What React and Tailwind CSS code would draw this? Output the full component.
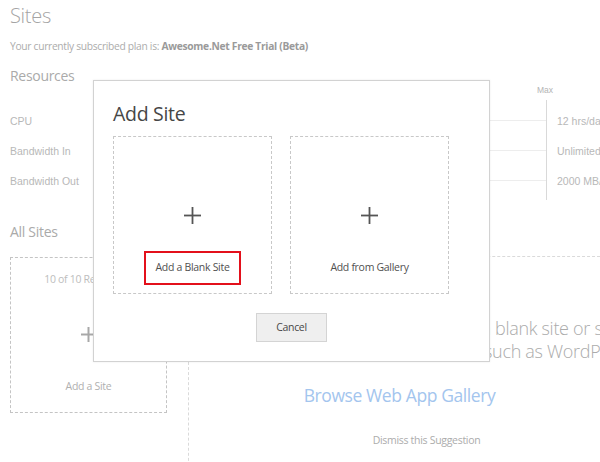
import React from "react";

const PlusIcon = ({ size = 17, color = "#555", width = 1.8 }) => (
  <svg width={size} height={size} viewBox={`0 0 ${size} ${size}`} fill="none">
    <line x1={size / 2} y1="0" x2={size / 2} y2={size} stroke={color} strokeWidth={width} />
    <line x1="0" y1={size / 2} x2={size} y2={size / 2} stroke={color} strokeWidth={width} />
  </svg>
);

const resources = [
  { label: "CPU", max: "12 hrs/day" },
  { label: "Bandwidth In", max: "Unlimited" },
  { label: "Bandwidth Out", max: "2000 MB/day" },
];

const ChoiceCard = ({ label, selected }) => (
  <div className="w-[159px] h-[158px] border border-dashed border-[#c8c8c8] flex flex-col items-center">
    <div className="mt-[70px]">
      <PlusIcon />
    </div>
    <div
      className={`mt-[27px] w-[97px] h-[34px] flex items-center justify-center border-2 text-[10.5px] text-[#505050] whitespace-nowrap ${
        selected ? "border-[#e3101b]" : "border-transparent"
      }`}
    >
      {label}
    </div>
  </div>
);

export default function App() {
  return (
    <div
      className="relative w-[600px] h-[462px] overflow-hidden bg-white tracking-[-0.3px]"
      style={{ fontFamily: '"Open Sans", "Noto Sans", sans-serif' }}
    >
      {/* page behind the dialog */}
      <div className="pl-[10px] text-[#acacac]">
        <h1 className="pt-[2px] text-[20px] leading-[28px] font-light text-[#a4a4a4]">Sites</h1>
        <p className="mt-[8px] text-[10.25px] leading-[16px] whitespace-nowrap">
          Your currently subscribed plan is:{" "}
          <span className="font-bold text-[#9a9a9a]">Awesome.Net Free Trial (Beta)</span>
        </p>

        <h2 className="mt-[12px] text-[14px] leading-[20px] text-[#aaa]">Resources</h2>

        <div
          className="-mt-[2px] w-[700px] tracking-normal"
          style={{ fontFamily: '"Liberation Sans", Arial, sans-serif' }}
        >
          <div className="h-[16px] flex">
            <div className="w-[527px]" />
            <span className="text-[8.5px] leading-[12px] text-[#b4b4b4]">Max</span>
          </div>
          <div className="flex">
            <div className="w-[536px] py-[5px]">
              {resources.map((r) => (
                <div key={r.label} className="h-[30px] flex items-center">
                  <span className="w-[110px] pt-[3px] text-[10.5px] text-[#b8b8b8]">{r.label}</span>
                  <div className="flex-1 h-px bg-[#ededed]" />
                </div>
              ))}
            </div>
            <div className="border-l border-[#d9d9d9] pl-[10px] py-[5px]">
              {resources.map((r) => (
                <div key={r.label} className="h-[30px] pt-[3px] flex items-center text-[10.5px] text-[#b8b8b8] whitespace-nowrap">
                  {r.max}
                </div>
              ))}
            </div>
          </div>
        </div>

        <h2 className="mt-[22px] text-[14px] leading-[20px] text-[#aaa]">All Sites</h2>

        <div className="mt-[14px] flex items-start">
          <div className="mt-px w-[157px] h-[156px] shrink-0 border border-dashed border-[#c4c4c4] flex flex-col items-center">
            <span className="mt-[13px] text-[10.5px] leading-[16px] text-[#bdbdbd] whitespace-nowrap">10 of 10 Remaining</span>
            <div className="mt-[40px]">
              <PlusIcon size={15} color="#a8a8a8" width={2} />
            </div>
            <span className="mt-[36px] text-[10.5px] leading-[16px] text-[#b0b0b0]">Add a Site</span>
          </div>

          <div className="ml-[21px] w-[422px] h-[220px] shrink-0 border-l border-t border-dashed border-[#dadada] pt-[60px] text-center">
            <div className="text-[18px] leading-[23px] font-light text-[#ababab] whitespace-nowrap text-left">
              <div className="flex">
                <span className="w-[306px] shrink-0 text-right">Get started with a&nbsp;</span>
                <span>blank site or start from an app</span>
              </div>
              <div className="flex">
                <span className="w-[295px] shrink-0 text-right">from the gallery,&nbsp;</span>
                <span>such as WordPress</span>
              </div>
            </div>
            <div className="mt-[19px] text-[17.5px] leading-[26px] tracking-[-0.4px] text-[#a3c5ee]">Browse Web App Gallery</div>
            <div className="mt-[24px] pl-[54px] text-[10.5px] leading-[16px] text-[#acacac]">Dismiss this Suggestion</div>
          </div>
        </div>
      </div>

      {/* dialog */}
      <div className="absolute left-[93px] top-[80px] w-[397px] h-[282px] bg-white border border-[#d2d2d2] shadow-[0_0_2px_rgba(0,0,0,0.08)] px-[19px] pt-[19px]">
        <h2 className="text-[19.5px] leading-[28px] text-[#464646]">Add Site</h2>
        <div className="mt-[8px] flex gap-[18px]">
          <ChoiceCard label="Add a Blank Site" selected />
          <ChoiceCard label="Add from Gallery" />
        </div>
        <div className="mt-[19px] flex justify-center">
          <button className="w-[71px] h-[29px] bg-[#efefef] border border-[#d4d4d4] text-[10.5px] text-[#474747]">
            Cancel
          </button>
        </div>
      </div>
    </div>
  );
}
